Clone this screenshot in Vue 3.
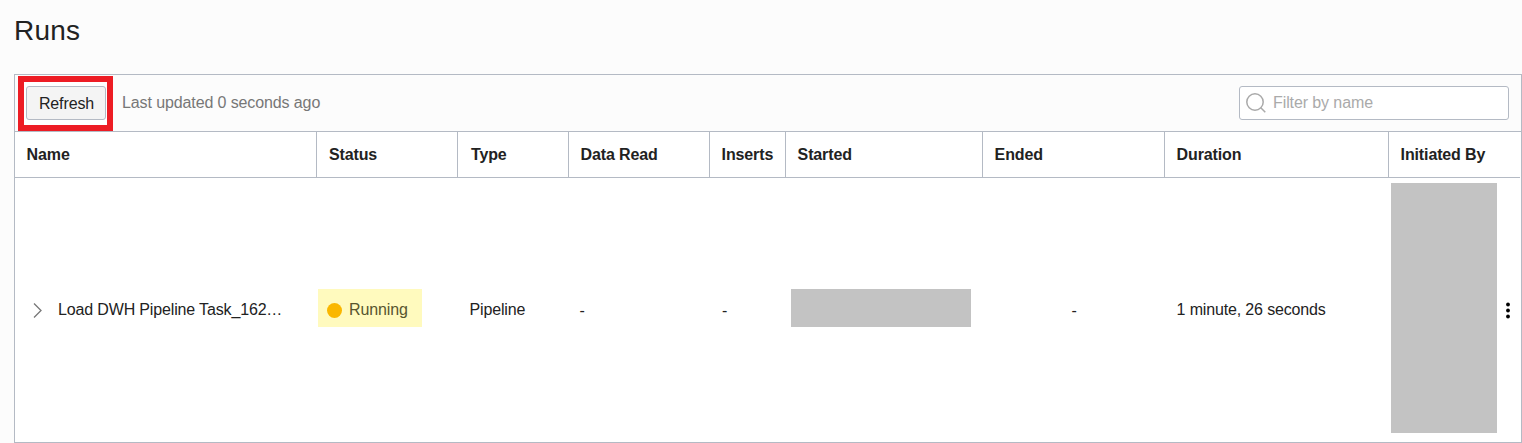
<script setup>
const columns = ['Name', 'Status', 'Type', 'Data Read', 'Inserts', 'Started', 'Ended', 'Duration', 'Initiated By']
</script>

<template>
  <main class="page">
    <h1 class="title">Runs</h1>
    <section class="panel">
      <div class="toolbar">
        <div class="callout"><button class="refresh" type="button"><span>Refresh</span></button></div>
        <span class="updated">Last updated 0 seconds ago</span>
        <div class="filter">
          <svg class="search" width="22" height="22" viewBox="0 0 22 22">
            <circle cx="10" cy="10" r="8.2" />
            <path d="M15.8 15.8 L20.3 20.3" />
          </svg>
          <span class="placeholder">Filter by name</span>
        </div>
      </div>
      <div class="table">
        <div class="row head">
          <div v-for="c in columns" :key="c" class="th"><span>{{ c }}</span></div>
        </div>
        <div class="row body">
          <div class="td name">
            <svg class="chevron" width="12" height="18" viewBox="0 0 12 18">
              <path d="M2 2.5 L9 9.5 L2 16.5" />
            </svg>
            <span class="task">Load DWH Pipeline Task_162…</span>
          </div>
          <div class="td status">
            <div class="badge"><i class="dot"></i><span class="state">Running</span></div>
          </div>
          <div class="td type"><span>Pipeline</span></div>
          <div class="td dash"><span>-</span></div>
          <div class="td dash inserts"><span>-</span></div>
          <div class="td started"><div class="mask"></div></div>
          <div class="td ended"><span>-</span></div>
          <div class="td duration"><span>1 minute, 26 seconds</span></div>
          <div class="td initiated">
            <div class="mask tall"></div>
            <svg class="more" width="6" height="18" viewBox="0 0 6 18">
              <circle cx="3" cy="3.5" r="1.9" />
              <circle cx="3" cy="9.5" r="1.9" />
              <circle cx="3" cy="15.5" r="1.9" />
            </svg>
          </div>
        </div>
      </div>
    </section>
  </main>
</template>

<style>
body {
  margin: 0;
  background: #fcfcfc;
}
</style>

<style scoped>
.page {
  box-sizing: border-box;
  width: 1522px;
  height: 443px;
  padding-left: 14px;
  overflow: hidden;
  background: #fcfcfc;
  color: #222;
  font: 16px/20px "Liberation Sans", Arial, sans-serif;
}
.title {
  height: 74px;
  margin: 0;
  font-size: 28px;
  font-weight: 400;
  letter-spacing: 0.2px;
  line-height: 61px;
}
.panel {
  box-sizing: border-box;
  width: 1508px;
  height: 369px;
  border: 1px solid #b4bac4;
}
.toolbar {
  display: flex;
  align-items: center;
  box-sizing: border-box;
  height: 57px;
  padding: 0 12px 0 3px;
  border-bottom: 1px solid #b4bac4;
}
.callout {
  box-sizing: border-box;
  width: 95px;
  height: 55px;
  margin-top: 1px;
  padding: 4px 1px 5px 2px;
  border: 6px solid #ed1c24;
  background: #fff;
}
.refresh {
  display: block;
  box-sizing: border-box;
  width: 80px;
  height: 34px;
  padding: 2px 0 0 1px;
  border: 1px solid #b4bac4;
  border-radius: 3px;
  background: #f4f4f4;
  color: #222;
  font: inherit;
  letter-spacing: -0.12px;
}
.updated {
  margin-left: 9px;
  color: #777;
  letter-spacing: -0.11px;
}
.filter {
  display: flex;
  align-items: center;
  box-sizing: border-box;
  width: 270px;
  height: 34px;
  margin-left: auto;
  padding-left: 5px;
  border: 1px solid #b4bac4;
  border-radius: 3px;
  background: #fff;
}
.search {
  fill: none;
  stroke: #aaa;
  stroke-width: 1.5;
}
.placeholder {
  margin-left: 6px;
  color: #aaa;
  letter-spacing: -0.1px;
}
.table {
  height: 310px;
  background: #fff;
}
.row {
  display: grid;
  grid-template-columns: 302px 141px 111px 141px 76px 197px 182px 224px 132px;
}
.head {
  box-sizing: border-box;
  width: 1505px;
  height: 46px;
  border-bottom: 1px solid #b4bac4;
  overflow: hidden;
}
.th {
  display: flex;
  align-items: center;
  padding-left: 11.6px;
  border-right: 1px solid #b4bac4;
  font-weight: 700;
  letter-spacing: -0.13px;
  white-space: nowrap;
}
.th:nth-child(2) {
  padding-left: 12px;
}
.th:nth-child(3) {
  padding-left: 13px;
}
.th:last-child {
  border-right: 0;
}
.body {
  height: 264px;
}
.td {
  display: flex;
  align-items: center;
  letter-spacing: -0.15px;
  white-space: nowrap;
}
.name {
  padding-left: 17px;
}
.chevron {
  fill: none;
  stroke: #777;
  stroke-width: 1.3;
}
.task {
  margin-left: 14px;
}
.status {
  padding-left: 1px;
}
.badge {
  display: flex;
  align-items: center;
  width: 95px;
  height: 38px;
  margin-top: -4px;
  padding-left: 9px;
  background: #fffabe;
  color: #57552e;
}
.dot {
  width: 15px;
  height: 15px;
  margin: 4px 7px 0 0;
  border-radius: 50%;
  background: #fab700;
}
.state {
  margin-top: 4px;
  letter-spacing: -0.1px;
}
.type {
  padding-left: 11.5px;
}
.dash {
  padding: 2px 0 0 10.5px;
}
.inserts {
  padding-left: 12px;
}
.started {
  padding-left: 5px;
}
.mask {
  width: 180px;
  height: 38px;
  margin-top: -4px;
  background: #c3c3c3;
}
.mask.tall {
  width: 106px;
  height: 250px;
}
.ended {
  justify-content: center;
  padding-top: 2px;
}
.duration {
  padding-left: 11.6px;
}
.initiated {
  padding-left: 2px;
}
.more {
  margin-left: 8px;
  fill: #000;
}
</style>
